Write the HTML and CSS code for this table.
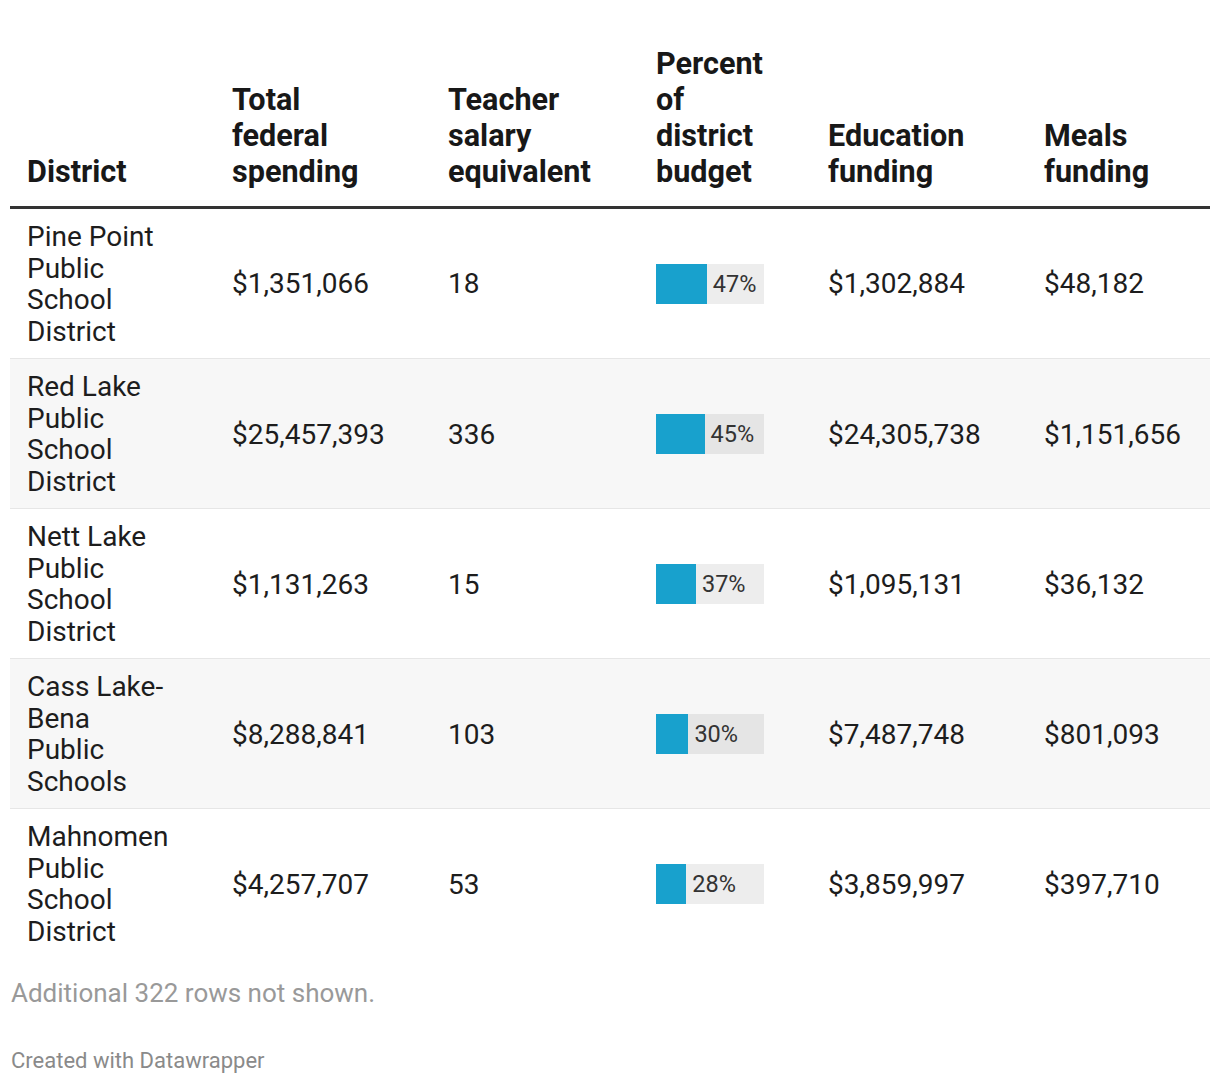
FILE: index.html
```html
<!DOCTYPE html>
<html lang="en">
<head>
<meta charset="utf-8">
<title>Federal spending by district</title>
<link rel="stylesheet" href="styles.css">
</head>
<body>
<div class="chart">
  <div class="table">
    <div class="row head">
      <div class="cell c1">District</div>
      <div class="cell c2">Total federal spending</div>
      <div class="cell c3">Teacher salary equivalent</div>
      <div class="cell c4">Percent of district budget</div>
      <div class="cell c5">Education funding</div>
      <div class="cell c6">Meals funding</div>
    </div>
    <div class="row">
      <div class="cell c1">Pine Point Public School District</div>
      <div class="cell c2">$1,351,066</div>
      <div class="cell c3">18</div>
      <div class="cell c4"><div class="bar"><div class="fill" style="width:47%"></div><span class="lbl">47%</span></div></div>
      <div class="cell c5">$1,302,884</div>
      <div class="cell c6">$48,182</div>
    </div>
    <div class="row">
      <div class="cell c1">Red Lake Public School District</div>
      <div class="cell c2">$25,457,393</div>
      <div class="cell c3">336</div>
      <div class="cell c4"><div class="bar"><div class="fill" style="width:45%"></div><span class="lbl">45%</span></div></div>
      <div class="cell c5">$24,305,738</div>
      <div class="cell c6">$1,151,656</div>
    </div>
    <div class="row">
      <div class="cell c1">Nett Lake Public School District</div>
      <div class="cell c2">$1,131,263</div>
      <div class="cell c3">15</div>
      <div class="cell c4"><div class="bar"><div class="fill" style="width:37%"></div><span class="lbl">37%</span></div></div>
      <div class="cell c5">$1,095,131</div>
      <div class="cell c6">$36,132</div>
    </div>
    <div class="row">
      <div class="cell c1">Cass Lake-Bena Public Schools</div>
      <div class="cell c2">$8,288,841</div>
      <div class="cell c3">103</div>
      <div class="cell c4"><div class="bar"><div class="fill" style="width:30%"></div><span class="lbl">30%</span></div></div>
      <div class="cell c5">$7,487,748</div>
      <div class="cell c6">$801,093</div>
    </div>
    <div class="row last">
      <div class="cell c1">Mahnomen Public School District</div>
      <div class="cell c2">$4,257,707</div>
      <div class="cell c3">53</div>
      <div class="cell c4"><div class="bar"><div class="fill" style="width:28%"></div><span class="lbl">28%</span></div></div>
      <div class="cell c5">$3,859,997</div>
      <div class="cell c6">$397,710</div>
    </div>
  </div>
  <p class="note">Additional 322 rows not shown.</p>
  <p class="credit">Created with Datawrapper</p>
</div>
</body>
</html>
```

FILE: styles.css
```css
html, body {
  margin: 0;
  padding: 0;
  background: #ffffff;
}

body {
  font-family: Roboto, "Liberation Sans", Arial, sans-serif;
  color: #1d1d1d;
}

.chart {
  padding: 46px 10px 0 10px;
  width: 1200px;
}

.table {
  display: flex;
  flex-direction: column;
}

.row {
  display: grid;
  grid-template-columns: 205px 216px 208px 172px 216px 1fr;
  padding: 12px 0 10.4px 17px;
  font-size: 28px;
  line-height: 31.65px;
  align-items: center;
  border-bottom: 1px solid #e6e6e6;
}

.row:nth-child(odd) {
  background: #f7f7f7;
}

.row.head {
  background: #ffffff;
  font-weight: 700;
  font-size: 30.6px;
  line-height: 36px;
  padding: 0 0 16px 17px;
  align-items: end;
  border-bottom: 3px solid #333333;
  color: #181818;
}

.row.last {
  border-bottom: none;
}

.c1 { padding-right: 62px; }
.c2 { padding-right: 50px; }
.c3 { padding-right: 30px; }
.c4 { padding-right: 64px; }
.c5 { padding-right: 40px; }
.c6 { padding-right: 0; }

.row.head .c1 { padding-right: 55px; }

.bar {
  position: relative;
  display: flex;
  align-items: center;
  width: 108px;
  height: 40px;
  background: rgba(0, 0, 0, 0.07);
}

.fill {
  height: 40px;
  background: #18a1cd;
  flex: none;
}

.lbl {
  font-size: 23.5px;
  line-height: 40px;
  padding-left: 6px;
  color: #333333;
}

.note {
  margin: 19px 0 0 1px;
  font-size: 26px;
  line-height: 32px;
  color: #999999;
}

.credit {
  margin: 38px 0 0 1px;
  font-size: 22px;
  line-height: 28px;
  color: #8a8a8a;
}
```
